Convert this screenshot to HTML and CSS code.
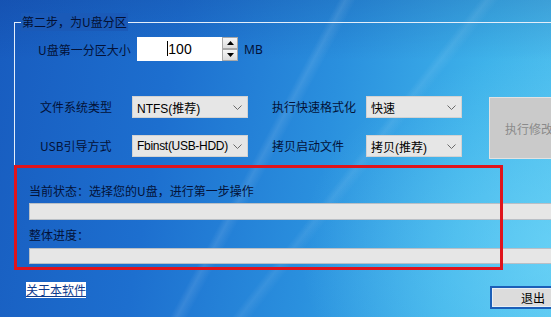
FILE: index.html
```html
<!DOCTYPE html>
<html lang="zh-CN">
<head>
<meta charset="utf-8">
<title>第二步，为U盘分区</title>
<link rel="stylesheet" href="styles.css">
</head>
<body>
<div class="win">
  <div class="group">
    <div class="legend">第二步，为U盘分区</div>
    <div class="row-size">
      <span class="lbl-size">U盘第一分区大小</span>
      <div class="num-input"><span class="caret"></span>100</div>
      <div class="spinner">
        <div class="spin-btn"><svg width="7" height="4" viewBox="0 0 7 4"><path d="M0 4 L3.5 0 L7 4 Z" fill="#000"/></svg></div>
        <div class="spin-btn"><svg width="7" height="4" viewBox="0 0 7 4"><path d="M0 0 L3.5 4 L7 0 Z" fill="#000"/></svg></div>
      </div>
      <span class="unit">MB</span>
    </div>
    <div class="opts">
      <span class="lbl">文件系统类型</span>
      <div class="select"><span>NTFS(推荐)</span><svg class="chev" width="9" height="5" viewBox="0 0 9 5"><path d="M0.5 0.5 L4.5 4.5 L8.5 0.5" fill="none" stroke="#6a6a6a" stroke-width="1"/></svg></div>
      <span class="lbl lbl2">执行快速格式化</span>
      <div class="select"><span>快速</span><svg class="chev" width="9" height="5" viewBox="0 0 9 5"><path d="M0.5 0.5 L4.5 4.5 L8.5 0.5" fill="none" stroke="#6a6a6a" stroke-width="1"/></svg></div>
      <div class="exec-btn"><span>执行修改</span></div>
      <span class="lbl">USB引导方式</span>
      <div class="select"><span class="tight">Fbinst(USB-HDD)</span><svg class="chev" width="9" height="5" viewBox="0 0 9 5"><path d="M0.5 0.5 L4.5 4.5 L8.5 0.5" fill="none" stroke="#6a6a6a" stroke-width="1"/></svg></div>
      <span class="lbl lbl2">拷贝启动文件</span>
      <div class="select"><span>拷贝(推荐)</span><svg class="chev" width="9" height="5" viewBox="0 0 9 5"><path d="M0.5 0.5 L4.5 4.5 L8.5 0.5" fill="none" stroke="#6a6a6a" stroke-width="1"/></svg></div>
    </div>
  </div>
  <div class="progress">
    <div class="status">当前状态：选择您的U盘，进行第一步操作</div>
    <div class="bar"></div>
    <div class="status status2">整体进度：</div>
    <div class="bar bar2"></div>
  </div>
  <div class="bottom">
    <a class="about" href="#">关于本软件</a>
    <div class="exit-btn"><div class="exit-inner">退出</div></div>
  </div>
  <div class="highlight"></div>
</div>
</body>
</html>
```

FILE: styles.css
```css
html, body {
  margin: 0;
  padding: 0;
}
body {
  width: 551px;
  height: 317px;
  overflow: hidden;
  font-family: "Noto Sans CJK SC", "Noto Sans", sans-serif;
  font-size: 12px;
  color: #020a1e;
}
.win {
  position: relative;
  width: 551px;
  height: 317px;
  overflow: hidden;
  box-sizing: border-box;
  padding-top: 22px;
  background:
    linear-gradient(118deg, rgba(255,255,255,0) 47%, rgba(255,255,255,0.10) 48%, rgba(255,255,255,0) 49.5%),
    linear-gradient(128deg, rgba(255,255,255,0) 60%, rgba(255,255,255,0.08) 61%, rgba(255,255,255,0) 62.5%),
    radial-gradient(ellipse 260px 200px at 560px 250px, rgba(120,220,250,0.55), rgba(120,220,250,0) 100%),
    linear-gradient(180deg, rgba(10,40,120,0.18) 0px, rgba(10,40,120,0) 60px),
    linear-gradient(100deg, #185cbf 0%, #1d6fcf 30%, #2a90de 58%, #3eb2ea 82%, #52c2ef 100%);
}
.group {
  position: relative;
  margin-left: 14px;
  height: 142px;
  border-top: 1px solid #e4eefa;
  border-left: 1px solid #e4eefa;
}
.legend {
  position: absolute;
  left: 6px;
  top: -10px;
  padding: 0 1px;
  line-height: 18px;
  background: #1a5ab8;
  color: #031033;
  white-space: nowrap;
}
.row-size {
  display: flex;
  align-items: center;
  margin-top: 14px;
  padding-left: 23px;
  height: 24px;
}
.lbl-size {
  flex: none;
  width: 99px;
  white-space: nowrap;
  color: #031238;
}
.num-input {
  flex: none;
  width: 85px;
  height: 24px;
  line-height: 24px;
  background: #fff;
  text-align: center;
  font-family: "Liberation Sans", "Noto Sans", sans-serif;
  font-size: 14px;
  color: #000;
}
.caret {
  display: inline-block;
  width: 1px;
  height: 15px;
  background: #000;
  vertical-align: -2px;
}
.spinner {
  flex: none;
  display: flex;
  flex-direction: column;
  width: 16px;
  height: 24px;
}
.spin-btn {
  flex: 1;
  display: flex;
  align-items: center;
  justify-content: center;
  background: linear-gradient(#f6f6f6, #dcdcdc);
  border: 1px solid #a8a8a8;
  box-sizing: border-box;
}
.unit {
  margin-left: 6px;
  font-family: "Noto Sans", sans-serif;
  font-size: 12px;
  color: #031238;
}
.opts {
  display: grid;
  grid-template-columns: 92px 116px 118px 96px 107px;
  grid-template-rows: 22px 22px;
  row-gap: 17px;
  margin-top: 35px;
  padding-left: 25px;
  align-items: center;
}
.lbl {
  color: #031238;
  line-height: 18px;
  white-space: nowrap;
}
.lbl2 {
  padding-left: 24px;
}
.select {
  height: 22px;
  box-sizing: border-box;
  display: flex;
  align-items: center;
  justify-content: space-between;
  padding: 0 5px 0 4px;
  background: #e6e6e6;
  border: 1px solid #d2d2d2;
  color: #000;
  font-family: "Liberation Sans", "Noto Sans CJK SC", sans-serif;
  font-size: 12px;
  white-space: nowrap;
}
.tight {
  letter-spacing: -0.3px;
}
.chev {
  flex: none;
}
.exec-btn {
  grid-column: 5;
  grid-row: 1 / span 2;
  align-self: stretch;
  margin-left: 27px;
  margin-top: 1px;
  margin-bottom: -2px;
  width: 80px;
  box-sizing: border-box;
  display: flex;
  align-items: center;
  justify-content: center;
  background: #cacaca;
  border: 1px solid #e2e2e2;
  color: #8a8a8a;
  white-space: nowrap;
}
.progress {
  margin-left: 29px;
  padding-top: 17px;
}
.status {
  line-height: 17px;
  height: 17px;
  color: #031238;
  white-space: nowrap;
}
.status2 {
  margin-top: 6px;
}
.bar {
  margin-top: 4px;
  width: 560px;
  height: 17px;
  box-sizing: border-box;
  background: #e6e6e6;
  border: 1px solid #b9bfc6;
}
.bar2 {
  margin-top: 5px;
  height: 16px;
}
.bottom {
  display: flex;
  align-items: flex-start;
  margin-top: 18px;
  padding-left: 26px;
}
.about {
  display: block;
  flex: none;
  width: 60px;
  line-height: 15px;
  height: 16px;
  background: #fff;
  color: #0d3a8c;
  text-decoration: underline;
  white-space: nowrap;
}
.exit-btn {
  flex: none;
  margin-left: 404px;
  margin-top: 4px;
  width: 86px;
  height: 23px;
  box-sizing: border-box;
  border: 2px solid #1b5fb8;
  background: #e9eef4;
  padding: 1px;
}
.exit-inner {
  height: 100%;
  display: flex;
  align-items: center;
  justify-content: center;
  background: #dcdcdc;
  color: #000;
  line-height: 17px;
}
.highlight {
  position: absolute;
  left: 14px;
  top: 165px;
  width: 489px;
  height: 105px;
  box-sizing: border-box;
  border: 3px solid #e0141c;
  pointer-events: none;
}
```
